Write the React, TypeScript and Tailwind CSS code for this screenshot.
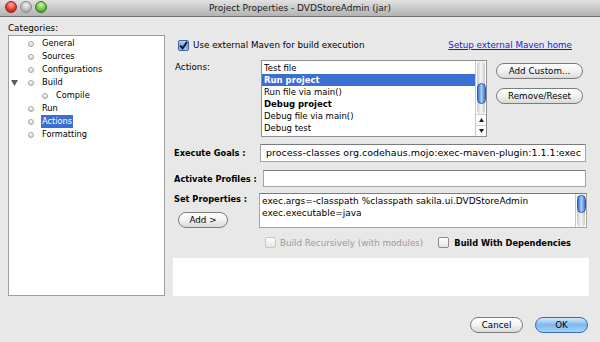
import React from "react";

const categories = [
  { label: "General", level: 0 },
  { label: "Sources", level: 0 },
  { label: "Configurations", level: 0 },
  { label: "Build", level: 0, expanded: true },
  { label: "Compile", level: 1 },
  { label: "Run", level: 0 },
  { label: "Actions", level: 0, selected: true },
  { label: "Formatting", level: 0 },
];

const actions = [
  { label: "Test file" },
  { label: "Run project", bold: true, selected: true },
  { label: "Run file via main()" },
  { label: "Debug project", bold: true },
  { label: "Debug file via main()" },
  { label: "Debug test" },
];

function Light({ color }: { color: string }) {
  return (
    <div
      className={`w-[12px] h-[12px] rounded-full border ${color}`}
    />
  );
}

function Bullet() {
  return (
    <div className="w-[6px] h-[6px] rounded-full border border-[#a2a2a2] bg-linear-to-b from-white to-[#d6d6d6]" />
  );
}

function Checkbox({ checked, disabled }: { checked?: boolean; disabled?: boolean }) {
  if (checked) {
    return (
      <div className="w-[11px] h-[11px] rounded-[2px] border border-[#3c63a6] bg-linear-to-b from-[#b9d6f6] via-[#6aa4e8] to-[#9ccaf6] flex items-center justify-center">
        <svg width="9" height="9" viewBox="0 0 9 9">
          <path d="M1.2 4.6 L3.6 7.4 L8 0.8" fill="none" stroke="#111" strokeWidth="1.8" />
        </svg>
      </div>
    );
  }
  return (
    <div
      className={`w-[11px] h-[11px] rounded-[2px] border bg-linear-to-b from-white to-[#e4e4e4] ${
        disabled ? "border-[#c6c6c6]" : "border-[#8a8a8a]"
      }`}
    />
  );
}

function AquaButton({ children, className }: { children: React.ReactNode; className?: string }) {
  return (
    <div
      className={`h-[16px] rounded-full border border-[#7c7c7c] bg-linear-to-b from-white via-[#f2f2f2] to-[#d9d9d9] flex items-center justify-center text-black ${className ?? ""}`}
    >
      {children}
    </div>
  );
}

function Scrollbar({ height, thumbTop, thumbHeight, arrows }: { height: number; thumbTop: number; thumbHeight: number; arrows?: boolean }) {
  return (
    <div className="w-[11px] flex flex-col border-l border-[#c8c8c8] bg-white" style={{ height }}>
      <div className="flex-1 mx-[1px] rounded-full bg-linear-to-r from-[#c9c9c9] via-[#f6f6f6] to-[#c9c9c9] flex flex-col items-center">
        <div style={{ height: thumbTop }} />
        <div
          className="w-[9px] rounded-full border border-[#2d5aa6] bg-linear-to-r from-[#3f74cf] via-[#a9cdf5] to-[#3f74cf]"
          style={{ height: thumbHeight }}
        />
      </div>
      {arrows && (
        <div className="flex flex-col items-center">
          <div className="h-[11px] w-full flex items-center justify-center border-t border-[#d0d0d0]">
            <svg width="5" height="4" viewBox="0 0 5 4">
              <polygon points="2.5,0 5,4 0,4" fill="#1e1e1e" />
            </svg>
          </div>
          <div className="h-[11px] w-full flex items-center justify-center border-t border-[#d0d0d0]">
            <svg width="5" height="4" viewBox="0 0 5 4">
              <polygon points="0,0 5,0 2.5,4" fill="#1e1e1e" />
            </svg>
          </div>
        </div>
      )}
    </div>
  );
}

export default function App() {
  return (
    <div className="w-[600px] h-[342px] overflow-hidden bg-[#e8e8e8] flex flex-col font-['DejaVu_Sans',sans-serif] text-[8.75px] leading-[12px] text-black">
      {/* title bar */}
      <div className="h-[17px] grid grid-cols-[1fr_auto_1fr] items-start border-b border-[#6f6f6f] bg-linear-to-b from-[#e2e2e2] to-[#b2b2b2]">
        <div className="flex gap-[3px] pl-[5px] pt-[1px]">
          <Light color="border-[#9c2020] bg-[radial-gradient(circle_at_50%_30%,#ffb0a8,#e23a2e_55%,#9c1410)]" />
          <Light color="border-[#8c8c8c] bg-[radial-gradient(circle_at_50%_30%,#f4f4f4,#bdbdbd_55%,#8e8e8e)]" />
          <Light color="border-[#2f7a1c] bg-[radial-gradient(circle_at_50%_30%,#d6f6b4,#6cc240_55%,#2f8a1a)]" />
        </div>
        <div className="text-[9px] leading-[16px] text-[#1a1a1a]">Project Properties - DVDStoreAdmin (jar)</div>
        <div />
      </div>

      <div className="flex">
        {/* categories */}
        <div className="ml-[8px] w-[157px] pt-[5px] flex flex-col">
          <div className="h-[12px]">Categories:</div>
          <div className="mt-[1px] h-[261px] bg-white border border-[#9d9d9d] pt-[1px] text-[8.25px]">
            {categories.map((c) => (
              <div key={c.label} className="h-[13px] flex items-center">
                <div className="w-[19px] pl-[2px] flex items-center">
                  {c.expanded && (
                    <svg width="7" height="6" viewBox="0 0 7 6">
                      <polygon points="0,0 7,0 3.5,6" fill="#5a5a5a" />
                    </svg>
                  )}
                </div>
                <div className={`flex items-center ${c.level === 1 ? "pl-[14px]" : ""}`}>
                  <Bullet />
                  <span
                    className={`ml-[7px] px-[1px] leading-[13px] ${
                      c.selected ? "bg-[#3b6fd2] text-white" : ""
                    }`}
                  >
                    {c.label}
                  </span>
                </div>
              </div>
            ))}
          </div>
        </div>

        {/* right side */}
        <div className="ml-[8px] w-[416px] flex flex-col">
          <div className="mt-[22px] h-[12px] flex items-center">
            <div className="ml-[5px]">
              <Checkbox checked />
            </div>
            <span className="ml-[4px]">Use external Maven for build execution</span>
            <span className="ml-auto mr-[17px] text-[#1818ea] underline">Setup external Maven home</span>
          </div>

          <div className="mt-[9px] flex items-start">
            <div className="w-[88px] pl-[2px] leading-[12px] pt-[1px]">Actions:</div>
            <div className="w-[226px] h-[77px] bg-white border border-[#8e8e8e] flex text-[8.5px]">
              <div className="flex-1 pt-[1px]">
                {actions.map((a) => (
                  <div
                    key={a.label}
                    className={`h-[12px] pl-[2px] leading-[12px] ${a.bold ? "font-bold" : ""} ${
                      a.selected ? "bg-[#3b6fd2] text-white" : ""
                    }`}
                  >
                    {a.label}
                  </div>
                ))}
              </div>
              <Scrollbar height={75} thumbTop={22} thumbHeight={21} arrows />
            </div>
            <div className="ml-[9px] w-[87px] flex flex-col">
              <AquaButton className="mt-[3px]">Add Custom...</AquaButton>
              <AquaButton className="mt-[9px]">Remove/Reset</AquaButton>
            </div>
          </div>

          <div className="mt-[7px] flex items-center">
            <div className="w-[87px] pl-[1px] font-bold text-[8.25px]">Execute Goals :</div>
            <div className="w-[326px] h-[18px] bg-white border border-[#a4a4a4] border-t-[#7a7a7a] pl-[5px] flex items-center text-[9.5px]">
              process-classes org.codehaus.mojo:exec-maven-plugin:1.1.1:exec
            </div>
          </div>

          <div className="mt-[8px] flex items-center">
            <div className="w-[90px] pl-[1px] font-bold text-[8.25px]">Activate Profiles :</div>
            <div className="w-[323px] h-[17px] bg-white border border-[#a4a4a4] border-t-[#7a7a7a]" />
          </div>

          <div className="mt-[6px] flex items-start">
            <div className="w-[86px] flex flex-col">
              <div className="pl-[1px] font-bold text-[8.25px] leading-[12px] pt-[0px]">Set Properties :</div>
              <AquaButton className="mt-[7px] ml-[5px] w-[50px] h-[15px]">Add &gt;</AquaButton>
            </div>
            <div className="w-[328px] h-[35px] bg-white border border-[#a4a4a4] border-t-[#7a7a7a] flex">
              <div className="flex-1 pl-[2px] leading-[12px] pt-[1px] text-[9px]">
                <div>exec.args=-classpath %classpath sakila.ui.DVDStoreAdmin</div>
                <div>exec.executable=java</div>
              </div>
              <Scrollbar height={33} thumbTop={1} thumbHeight={18} />
            </div>
          </div>

          <div className="mt-[9px] h-[11px] flex items-center">
            <div className="ml-[92px]">
              <Checkbox disabled />
            </div>
            <span className="ml-[4px] text-[#9b9b9b]">Build Recursively (with modules)</span>
            <div className="ml-auto">
              <Checkbox />
            </div>
            <span className="ml-[5px] mr-[18px] font-bold text-[8.25px]">Build With Dependencies</span>
          </div>

          <div className="mt-[10px] h-[38px] bg-white" />
        </div>
      </div>

      <div className="mt-[21px] flex justify-end pr-[12px] gap-[12px]">
        <AquaButton className="w-[53px]">Cancel</AquaButton>
        <div className="w-[53px] h-[16px] rounded-full border border-[#3d6aa8] bg-linear-to-b from-[#d2e8fc] via-[#7db8ee] to-[#a6d4fa] flex items-center justify-center">
          OK
        </div>
      </div>
    </div>
  );
}
